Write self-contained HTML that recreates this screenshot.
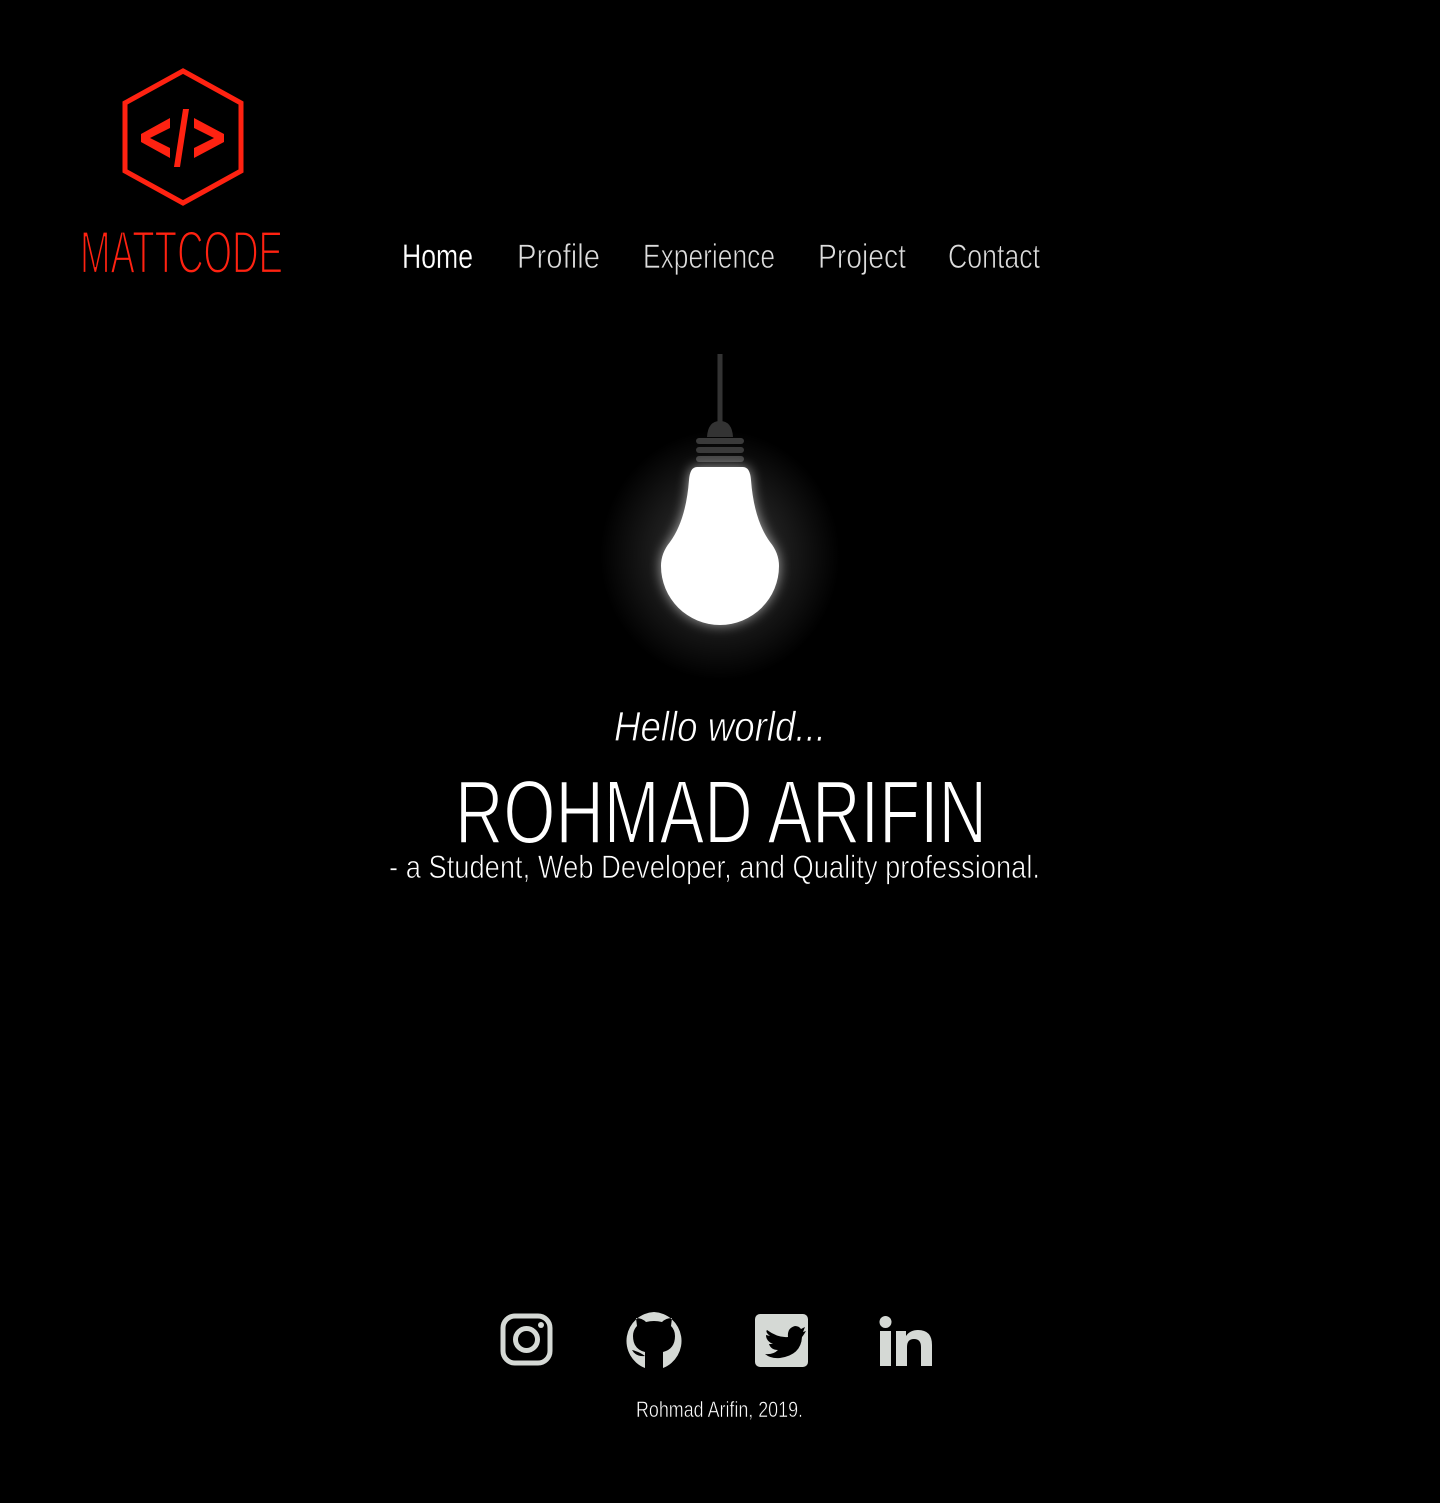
<!DOCTYPE html>
<html><head><meta charset="utf-8"><style>
html,body{margin:0;padding:0;background:#000;width:1440px;height:1503px;overflow:hidden}
svg{display:block}
</style></head><body>
<svg width="1440" height="1503" viewBox="0 0 1440 1503" xmlns="http://www.w3.org/2000/svg" font-family="Liberation Sans, sans-serif">
<defs>
<radialGradient id="glow" cx="50%" cy="50%" r="50%">
<stop offset="0%" stop-color="#fff" stop-opacity="0.35"/>
<stop offset="50%" stop-color="#fff" stop-opacity="0.12"/>
<stop offset="100%" stop-color="#fff" stop-opacity="0"/>
</radialGradient>
<filter id="blur"><feGaussianBlur stdDeviation="6"/></filter>
</defs>
<rect width="1440" height="1503" fill="#000"/>
<!-- logo -->
<polygon points="183,71 241,103 241,171 183,203 125,171 125,103" fill="none" stroke="#ff2211" stroke-width="5"/>
<polygon points="170,118 170,128 150,138 170,148 170,158 141,142 141,134" fill="#ff2211"/>
<polygon points="194,118 194,128 214,138 194,148 194,158 224,142 224,134" fill="#ff2211"/>
<polygon points="183,109 189,109 180,167 174,167" fill="#ff2211"/>
<text x="80" y="273" font-size="60" fill="#ff2211" textLength="203" lengthAdjust="spacingAndGlyphs" stroke="#000" stroke-width="2.2">MATTCODE</text>
<!-- nav -->
<g fill="#fff" font-size="34" stroke="#000" stroke-width="0.8">
<text x="402" y="268" textLength="71" lengthAdjust="spacingAndGlyphs" stroke-width="0.3">Home</text>
<text x="517" y="268" textLength="83" lengthAdjust="spacingAndGlyphs" fill="#ddd">Profile</text>
<text x="643" y="268" textLength="132" lengthAdjust="spacingAndGlyphs" fill="#ddd">Experience</text>
<text x="818" y="268" textLength="88" lengthAdjust="spacingAndGlyphs" fill="#ddd">Project</text>
<text x="948" y="268" textLength="92" lengthAdjust="spacingAndGlyphs" fill="#ddd">Contact</text>
</g>
<!-- bulb -->
<ellipse cx="720" cy="555" rx="120" ry="125" fill="url(#glow)"/>
<rect x="717.5" y="354" width="5" height="72" fill="#333"/>
<path d="M707,437 Q708,421 720,421 Q732,421 733,437 Z" fill="#333"/>
<rect x="696" y="438" width="48" height="6" rx="3" fill="#3a3a3a"/>
<rect x="696" y="447" width="48" height="6" rx="3" fill="#3a3a3a"/>
<rect x="696" y="456" width="48" height="6" rx="3" fill="#444"/>
<path id="b" d="M697,467 L743,467 Q750,467 751,480 Q754,520 770,542 Q779,553 779,566 A59,59 0 0 1 661,566 Q661,553 670,542 Q686,520 689,480 Q690,467 697,467 Z" fill="#fff" filter="url(#blur)" opacity="0.6"/>
<path d="M697,467 L743,467 Q750,467 751,480 Q754,520 770,542 Q779,553 779,566 A59,59 0 0 1 661,566 Q661,553 670,542 Q686,520 689,480 Q690,467 697,467 Z" fill="#fff"/>
<!-- hero text -->
<g stroke="#000">
<text x="614" y="741" font-size="42" font-style="italic" fill="#fff" textLength="212" lengthAdjust="spacingAndGlyphs" stroke-width="0.8">Hello world...</text>
<text x="455" y="843" font-size="90" fill="#fff" textLength="532" lengthAdjust="spacingAndGlyphs" stroke-width="2">ROHMAD ARIFIN</text>
<text x="389" y="878" font-size="32" fill="#fff" textLength="651" lengthAdjust="spacingAndGlyphs" stroke-width="0.8">- a Student, Web Developer, and Quality professional.</text>
</g>
<!-- icons -->
<g fill="#d5d9d5">
<rect x="503" y="1316" width="47" height="47" rx="12" fill="none" stroke="#d5d9d5" stroke-width="5"/>
<circle cx="526.5" cy="1339.5" r="11" fill="none" stroke="#d5d9d5" stroke-width="5"/>
<circle cx="541" cy="1325" r="3"/>
<path d="M654,1312 A29,29 0 0 0 645,1368 L645,1356 Q636,1357 632,1350 Q640,1352 645,1356 L645,1352 Q633,1349 633,1336 Q633,1330 637,1326 L636,1318 Q642,1318 646,1322 Q654,1320 662,1322 Q666,1318 672,1318 L671,1326 Q675,1330 675,1336 Q675,1349 663,1352 L663,1368 A29,29 0 0 0 654,1312 Z"/>
<rect x="755" y="1314" width="53" height="53" rx="5"/>
<path d="M767,1330 Q778,1338 788,1337 Q787,1328 795,1326 Q799,1326 801,1329 L805,1327 L803,1332 L806,1331 Q803,1336 802,1337 Q801,1355 780,1358 Q771,1359 765,1354 Q773,1355 778,1350 Q771,1350 769,1344 L773,1344 Q766,1341 766,1335 L770,1336 Q765,1332 767,1330 Z" fill="#000"/>
<circle cx="885.5" cy="1322" r="6"/>
<rect x="880" y="1331" width="11" height="35"/>
<path d="M896,1331 L906,1331 L906,1336 Q910,1330 918,1330 Q932,1330 932,1345 L932,1366 L921,1366 L921,1347 Q921,1339 914,1339 Q907,1339 907,1347 L907,1366 L896,1366 Z"/>
</g>
<text x="636" y="1417" font-size="22" fill="#fff" textLength="167" lengthAdjust="spacingAndGlyphs" stroke="#000" stroke-width="0.5">Rohmad Arifin, 2019.</text>
</svg>
</body></html>
